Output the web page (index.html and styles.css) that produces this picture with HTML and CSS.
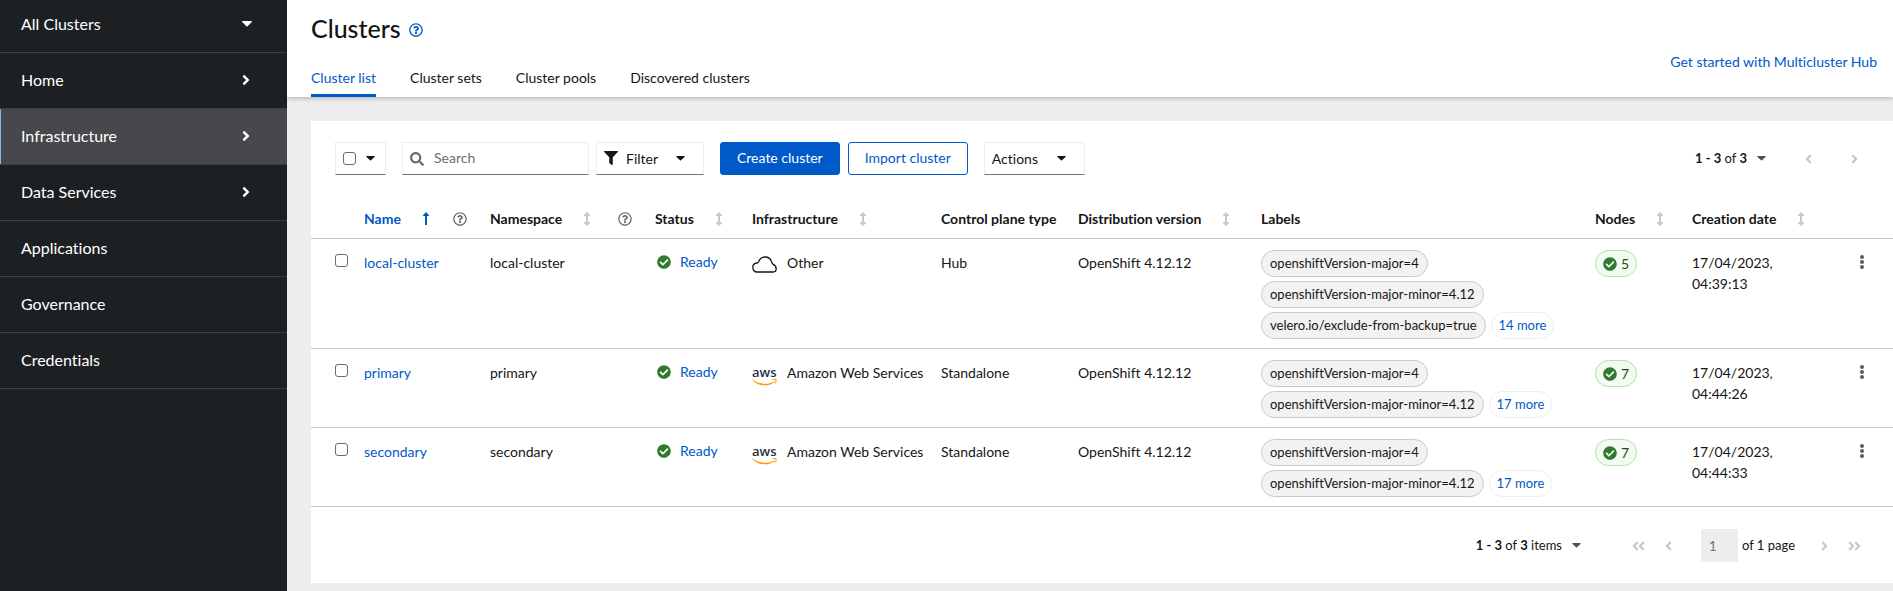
FILE: index.html
```
<!DOCTYPE html>
<html lang="en">
<head>
<meta charset="utf-8">
<title>Clusters</title>
<link rel="stylesheet" href="styles.css">
</head>
<body>
<svg class="sprite" aria-hidden="true">
  <symbol id="caret" viewBox="0 0 10 6"><path d="M.7 0h8.600c.6 0 .9.7.5 1.100L5.600 5.200a.9.9 0 0 1-1.200 0L.2 1.100C-.2.7.1 0 .7 0z"/></symbol>
  <symbol id="right" viewBox="0 0 256 512"><path d="M224.300 273l-136 136c-9.400 9.400-24.600 9.400-33.900 0l-22.600-22.600c-9.400-9.400-9.400-24.600 0-33.900l96.400-96.400-96.400-96.400c-9.400-9.400-9.400-24.600 0-33.900L54.300 103c9.400-9.400 24.600-9.400 33.900 0l136 136c9.500 9.400 9.500 24.600.1 34z"/></symbol>
  <symbol id="left" viewBox="0 0 256 512"><path d="M31.700 239l136-136c9.400-9.400 24.600-9.400 33.900 0l22.600 22.600c9.400 9.400 9.400 24.600 0 33.900L127.900 256l96.400 96.400c9.400 9.400 9.400 24.600 0 33.900L201.700 409c-9.400 9.400-24.600 9.400-33.900 0l-136-136c-9.500-9.400-9.500-24.600-.1-34z"/></symbol>
  <symbol id="help" viewBox="0 0 512 512"><path d="M256 8C119 8 8 119.100 8 256c0 137 111 248 248 248s248-111 248-248C504 119.100 393 8 256 8zm0 448c-110.500 0-200-89.400-200-200 0-110.500 89.500-200 200-200 110.500 0 200 89.500 200 200 0 110.500-89.400 200-200 200zm107.200-255.200c0 67.100-72.400 68.100-72.400 92.900V300c0 6.600-5.400 12-12 12h-45.600c-6.600 0-12-5.400-12-12v-8.700c0-35.700 27.100-50 47.600-61.500 17.600-9.800 28.300-16.500 28.300-29.600 0-17.200-22-28.700-39.800-28.700-23.200 0-33.900 11-48.900 30-4.100 5.100-11.500 6.100-16.700 2.100l-27.800-21.100c-5.100-3.900-6.300-11.100-2.600-16.400C184.800 131.500 214.900 112 261.800 112c49 0 101.500 38.300 101.500 88.800zM298 368c0 23.200-18.800 42-42 42s-42-18.800-42-42 18.800-42 42-42 42 18.800 42 42z"/></symbol>
  <symbol id="check" viewBox="0 0 512 512"><path d="M504 256c0 137-111 248-248 248S8 393 8 256 119 8 256 8s248 111 248 248zM227.300 387.300l184-184c6.200-6.200 6.200-16.400 0-22.600l-22.600-22.600c-6.200-6.200-16.400-6.200-22.600 0L216 308.100l-70.100-70.100c-6.200-6.200-16.400-6.200-22.600 0l-22.600 22.600c-6.200 6.200-6.200 16.400 0 22.600l104 104c6.200 6.300 16.400 6.300 22.600.1z"/></symbol>
  <symbol id="search" viewBox="0 0 512 512"><path d="M505 442.700L405.300 343c-4.500-4.500-10.600-7-17-7H372c27.600-35.300 44-79.700 44-128C416 93.100 322.900 0 208 0S0 93.100 0 208s93.100 208 208 208c48.300 0 92.700-16.400 128-44v16.300c0 6.400 2.500 12.500 7 17l99.700 99.700c9.400 9.400 24.600 9.400 33.900 0l28.300-28.300c9.400-9.400 9.400-24.600.1-34zM208 336c-70.700 0-128-57.200-128-128 0-70.700 57.200-128 128-128 70.700 0 128 57.200 128 128 0 70.700-57.200 128-128 128z"/></symbol>
  <symbol id="filter" viewBox="0 0 512 512"><path d="M488 0H24C2.700 0-8 25.900 7.100 41L192 225.900V432c0 7.800 3.800 15.200 10.200 19.700l80 56C298 518.700 320 507.500 320 488V225.900L504.900 41C520 25.900 509.300 0 488 0z"/></symbol>
  <symbol id="up" viewBox="0 0 6 13"><path d="M3 0l3 3.200v.8H4v9H2V4H0v-.8z"/></symbol>
  <symbol id="sort" viewBox="0 0 6 14"><path d="M3 0l3 3v1H4v6h2v1l-3 3-3-3v-1h2V4H0V3z"/></symbol>
  <symbol id="dots" viewBox="0 0 4 14"><circle cx="2" cy="2" r="2"/><circle cx="2" cy="7" r="2"/><circle cx="2" cy="12" r="2"/></symbol>
  <symbol id="cloud" viewBox="0 0 25 17"><path d="M5 16C2.500 16 .8 14 .8 11.600.8 9 2.500 7.200 5 7c.7 0 1.300-.3 1.700-1.300C7.700 2.700 10 1 13 1c3.400 0 6 2.200 6.700 5.200.2.900.5 1.500 1.300 2 1.900 1 3.200 2.500 3.200 4.600 0 2-1.300 3.200-3.200 3.200z" fill="none" stroke="currentColor" stroke-width="1.300"/></symbol>
  <symbol id="smile" viewBox="0 0 25 7"><path d="M.3.600C6 5 15 6.500 22.300 2.500c.5-.2.800.3.400.7C16.500 7.800 6 7.500.1 1c-.3-.3-.1-.6.2-.4zM24.500.5c-.6-.8-3.300-.5-4.400.2-.4.300-.1.500.3.4 1-.2 2.800-.4 3.100.1.400.5-.3 2.300-.7 3.200-.1.300.2.400.5.100 1.100-1 1.700-3.300 1.200-4z"/></symbol>
</svg>

<div class="app">
  <nav class="sidebar" aria-label="Main">
    <button class="nav-item perspective" type="button">All Clusters<svg class="nav-caret"><use href="#caret"/></svg></button>
    <button class="nav-item" type="button">Home<svg class="nav-chevron"><use href="#right"/></svg></button>
    <button class="nav-item active" type="button">Infrastructure<svg class="nav-chevron"><use href="#right"/></svg></button>
    <button class="nav-item" type="button">Data Services<svg class="nav-chevron"><use href="#right"/></svg></button>
    <a class="nav-item" href="#applications">Applications</a>
    <a class="nav-item" href="#governance">Governance</a>
    <a class="nav-item" href="#credentials">Credentials</a>
  </nav>

  <main class="main">
    <header class="page-header">
      <div class="heading">
        <div class="title-row">
          <h1>Clusters</h1>
          <button class="icon-button title-help" type="button" aria-label="About clusters"><svg class="icon"><use href="#help"/></svg></button>
        </div>
        <nav class="tabs" aria-label="Clusters">
          <a class="tab current" href="#list" aria-current="page">Cluster list</a>
          <a class="tab" href="#sets">Cluster sets</a>
          <a class="tab" href="#pools">Cluster pools</a>
          <a class="tab" href="#discovered">Discovered clusters</a>
        </nav>
      </div>
      <a class="start-link" href="#start">Get started with Multicluster Hub</a>
    </header>

    <section class="card">
      <div class="toolbar">
        <div class="control bulk">
          <input type="checkbox" aria-label="Select all">
          <button class="icon-button" type="button" aria-label="Selection options"><svg class="caret"><use href="#caret"/></svg></button>
        </div>
        <div class="filters">
          <label class="control search"><svg class="icon"><use href="#search"/></svg><input type="text" placeholder="Search" aria-label="Search"></label>
          <button class="control filter" type="button"><svg class="icon"><use href="#filter"/></svg>Filter<svg class="caret"><use href="#caret"/></svg></button>
        </div>
        <div class="actions">
          <button class="button primary" type="button">Create cluster</button>
          <button class="button secondary" type="button">Import cluster</button>
        </div>
        <button class="control actions-menu" type="button">Actions<svg class="caret"><use href="#caret"/></svg></button>
        <div class="pager top">
          <button class="range" type="button"><span><b>1 - 3</b> of <b>3</b></span><svg class="caret"><use href="#caret"/></svg></button>
          <button class="page-button" type="button" disabled aria-label="Previous page"><svg class="chevron"><use href="#left"/></svg></button>
          <button class="page-button" type="button" disabled aria-label="Next page"><svg class="chevron"><use href="#right"/></svg></button>
        </div>
      </div>

      <table class="clusters">
        <colgroup>
          <col class="c-check"><col class="c-name"><col class="c-namespace"><col class="c-status"><col class="c-infra"><col class="c-plane"><col class="c-version"><col><col class="c-nodes"><col class="c-date"><col class="c-menu">
        </colgroup>
        <thead>
          <tr>
            <td></td>
            <th scope="col"><div class="head sorted"><button class="sort" type="button">Name<svg class="up"><use href="#up"/></svg></button><button class="icon-button" type="button" aria-label="About name"><svg class="icon"><use href="#help"/></svg></button></div></th>
            <th scope="col"><div class="head"><button class="sort" type="button">Namespace<svg class="updown"><use href="#sort"/></svg></button><button class="icon-button" type="button" aria-label="About namespace"><svg class="icon"><use href="#help"/></svg></button></div></th>
            <th scope="col"><button class="sort" type="button">Status<svg class="updown"><use href="#sort"/></svg></button></th>
            <th scope="col"><button class="sort" type="button">Infrastructure<svg class="updown"><use href="#sort"/></svg></button></th>
            <th scope="col">Control plane type</th>
            <th scope="col"><button class="sort" type="button">Distribution version<svg class="updown"><use href="#sort"/></svg></button></th>
            <th scope="col">Labels</th>
            <th scope="col"><button class="sort" type="button">Nodes<svg class="updown"><use href="#sort"/></svg></button></th>
            <th scope="col"><button class="sort" type="button">Creation date<svg class="updown"><use href="#sort"/></svg></button></th>
            <td></td>
          </tr>
        </thead>
        <tbody>
          <tr>
            <td class="check-cell"><input type="checkbox" aria-label="Select local-cluster"></td>
            <td><a href="#local-cluster">local-cluster</a></td>
            <td>local-cluster</td>
            <td class="status-cell"><button class="status" type="button"><svg class="icon"><use href="#check"/></svg>Ready</button></td>
            <td><div class="provider"><svg class="cloud"><use href="#cloud"/></svg>Other</div></td>
            <td>Hub</td>
            <td>OpenShift 4.12.12</td>
            <td class="label-cell"><div class="labels"><span class="pill">openshiftVersion-major=4</span><span class="pill">openshiftVersion-major-minor=4.12</span><span class="pill">velero.io/exclude-from-backup=true</span><button class="pill more" type="button">14 more</button></div></td>
            <td class="label-cell"><span class="pill nodes"><svg class="icon"><use href="#check"/></svg>5</span></td>
            <td>17/04/2023, 04:39:13</td>
            <td class="menu-cell"><button class="icon-button" type="button" aria-label="Actions for local-cluster"><svg class="dots"><use href="#dots"/></svg></button></td>
          </tr>
          <tr>
            <td class="check-cell"><input type="checkbox" aria-label="Select primary"></td>
            <td><a href="#primary">primary</a></td>
            <td>primary</td>
            <td class="status-cell"><button class="status" type="button"><svg class="icon"><use href="#check"/></svg>Ready</button></td>
            <td><div class="provider"><span class="aws">aws<svg class="smile"><use href="#smile"/></svg></span>Amazon Web Services</div></td>
            <td>Standalone</td>
            <td>OpenShift 4.12.12</td>
            <td class="label-cell"><div class="labels"><span class="pill">openshiftVersion-major=4</span><span class="pill">openshiftVersion-major-minor=4.12</span><button class="pill more" type="button">17 more</button></div></td>
            <td class="label-cell"><span class="pill nodes"><svg class="icon"><use href="#check"/></svg>7</span></td>
            <td>17/04/2023, 04:44:26</td>
            <td class="menu-cell"><button class="icon-button" type="button" aria-label="Actions for primary"><svg class="dots"><use href="#dots"/></svg></button></td>
          </tr>
          <tr>
            <td class="check-cell"><input type="checkbox" aria-label="Select secondary"></td>
            <td><a href="#secondary">secondary</a></td>
            <td>secondary</td>
            <td class="status-cell"><button class="status" type="button"><svg class="icon"><use href="#check"/></svg>Ready</button></td>
            <td><div class="provider"><span class="aws">aws<svg class="smile"><use href="#smile"/></svg></span>Amazon Web Services</div></td>
            <td>Standalone</td>
            <td>OpenShift 4.12.12</td>
            <td class="label-cell"><div class="labels"><span class="pill">openshiftVersion-major=4</span><span class="pill">openshiftVersion-major-minor=4.12</span><button class="pill more" type="button">17 more</button></div></td>
            <td class="label-cell"><span class="pill nodes"><svg class="icon"><use href="#check"/></svg>7</span></td>
            <td>17/04/2023, 04:44:33</td>
            <td class="menu-cell"><button class="icon-button" type="button" aria-label="Actions for secondary"><svg class="dots"><use href="#dots"/></svg></button></td>
          </tr>
        </tbody>
      </table>

      <div class="pager bottom">
        <button class="range" type="button"><span><b>1 - 3</b> of <b>3</b> items</span><svg class="caret"><use href="#caret"/></svg></button>
        <button class="page-button" type="button" disabled aria-label="First page"><svg class="chevron"><use href="#left"/></svg><svg class="chevron"><use href="#left"/></svg></button>
        <button class="page-button" type="button" disabled aria-label="Previous page"><svg class="chevron"><use href="#left"/></svg></button>
        <label class="page-number"><input type="text" value="1" disabled aria-label="Current page">of 1 page</label>
        <button class="page-button" type="button" disabled aria-label="Next page"><svg class="chevron"><use href="#right"/></svg></button>
        <button class="page-button" type="button" disabled aria-label="Last page"><svg class="chevron"><use href="#right"/></svg><svg class="chevron"><use href="#right"/></svg></button>
      </div>
    </section>
  </main>
</div>
</body>
</html>
```
FILE: styles.css
```
* { box-sizing: border-box; }

body {
  margin: 0;
  background: #ededed;
  color: #151515;
  font: 14px/21px Lato, "Open Sans", sans-serif;
  font-variant-ligatures: none;
}

button, input { margin: 0; font: inherit; color: inherit; }
button { padding: 0; border: 0; background: none; text-align: left; }
a { color: #0059c8; text-decoration: none; }
b { font-weight: 700; }
svg { display: block; flex: none; fill: currentColor; }

.sprite { position: absolute; width: 0; height: 0; }
.icon { width: 14px; height: 14px; }
.caret { width: 9px; height: 5px; }

input[type="checkbox"] {
  appearance: none;
  display: block;
  width: 13px;
  height: 13px;
  border: 1px solid #6b6b6b;
  border-radius: 3px;
  background: #fff;
}

.app { display: flex; min-height: 100vh; }

/* Sidebar */
.sidebar { flex: none; width: 287px; background: #1d2023; }

.nav-item {
  display: flex;
  align-items: center;
  justify-content: space-between;
  width: 100%;
  height: 56px;
  padding: 0 37px 2px 21px;
  border-bottom: 1px solid #3b3e42;
  color: #fff;
  font-size: 16px;
  line-height: 24px;
}

.perspective { height: 53px; padding: 0 35px 4px 21px; }
.nav-item.active { background: #47484c; box-shadow: inset 1px 0 #73bcf7; }
.nav-caret { width: 10px; height: 6px; }
.nav-chevron { width: 8px; height: 16px; }

/* Page header */
.main { flex: 1; min-width: 0; }

.page-header {
  display: flex;
  align-items: flex-start;
  justify-content: space-between;
  padding: 0 16px 0 24px;
  background: #fff;
  box-shadow: 0 2px 4px rgba(0, 0, 0, 0.2);
}

.heading { padding-top: 11px; }
.title-row { display: flex; align-items: center; gap: 8px; }
h1 { margin: 0; font-size: 25px; font-weight: 500; line-height: 34px; }
.title-help { padding-top: 4px; color: #0059c8; }
.start-link { margin-top: 51px; }

.tabs { display: flex; gap: 34px; margin-top: 17px; }
.tab { height: 35px; padding-top: 5px; border-bottom: 3px solid transparent; color: #151515; }
.tab.current { border-bottom-color: #0059c8; color: #0059c8; }

/* Card and toolbar */
.card { margin: 24px 0 8px 24px; background: #fff; }
.toolbar { display: flex; align-items: center; padding: 21px 35px 0 24px; }

.control {
  display: flex;
  align-items: center;
  height: 33px;
  border: 1px solid #ededed;
  border-bottom-color: #72767b;
}

.bulk { width: 51px; padding: 0 10px 0 7px; justify-content: space-between; margin-right: 16px; }
.filters { display: flex; gap: 7px; margin-right: 16px; }
.search { width: 187px; gap: 10px; padding: 0 7px; color: #6a6e73; }
.search input { flex: 1; min-width: 0; padding: 0 0 2px; border: 0; outline: 0; background: none; }
.search input::placeholder { color: #6a6e73; opacity: 1; }
.filter { width: 108px; gap: 8px; padding: 0 18px 1px 7px; }
.filter .caret, .actions-menu .caret { margin-left: auto; }
.actions { display: flex; gap: 8px; margin-right: 16px; }
.actions-menu { width: 101px; padding: 0 18px 1px 7px; }

.button { height: 33px; padding: 0 16px 2px; border: 1px solid #0059c8; border-radius: 3px; text-align: center; }
.primary { background: #0059c8; color: #fff; }
.secondary { color: #0059c8; }

/* Pagination */
.pager { display: flex; align-items: center; justify-content: flex-end; font-size: 13px; }
.pager.top { margin-left: auto; gap: 38px; }
.range { display: flex; align-items: center; gap: 10px; }
.range .caret { color: #4f5255; }
.page-button { display: flex; align-items: center; justify-content: center; width: 8px; color: #c7c7c7; }
.chevron { width: 7px; height: 14px; }
.chevron + .chevron { margin-left: -1px; }

.pager.bottom { gap: 22px; padding: 22px 35px 21px 24px; }
.pager.bottom .range { margin-right: 32px; }
.page-number { display: flex; align-items: center; gap: 4px; margin: 0 3px 0 6px; }
.page-number input { width: 37px; height: 33px; padding: 0 8px; border: 0; background: #ededed; color: #6a6e73; }

/* Table */
.clusters { width: 100%; margin-top: 22px; border-collapse: collapse; table-layout: fixed; }
.c-check { width: 45px; }
.c-name { width: 126px; }
.c-namespace { width: 165px; }
.c-status { width: 97px; }
.c-infra { width: 189px; }
.c-plane { width: 137px; }
.c-version { width: 183px; }
.c-nodes { width: 97px; }
.c-date { width: 138px; }
.c-menu { width: 71px; }

.clusters th, .clusters td { padding: 0 8px; text-align: left; vertical-align: top; border-bottom: 1px solid #c9c9c9; }
.clusters th { padding: 11px 0 9px 8px; font-weight: 700; white-space: nowrap; }
.clusters tbody td { padding-top: 13px; padding-bottom: 9px; }

.head { display: flex; align-items: center; justify-content: space-between; padding-right: 15px; }
.head .icon-button { color: #6a6e73; }
.sort { display: flex; align-items: center; gap: 22px; }
.sorted .sort { color: #0059c8; }
.up { width: 6px; height: 13px; }
.updown { width: 6px; height: 14px; color: #c9c9c9; }

.clusters tbody .check-cell { padding: 15px 0 0 24px; }
.clusters tbody .status-cell { padding-top: 12px; }
.status { display: flex; align-items: center; gap: 9px; padding-left: 2px; color: #0059c8; }
.status .icon, .nodes .icon { color: #2f7a2f; }

.provider { display: flex; gap: 10px; white-space: nowrap; }
.cloud { width: 25px; height: 17px; margin-top: 4px; }
.aws { width: 25px; height: 21px; padding-top: 3px; color: #252f3e; font: 600 13px/14px "Open Sans", sans-serif; }
.smile { width: 25px; height: 7px; color: #f90; }

.clusters tbody .label-cell { padding-top: 11px; }
.labels { display: flex; flex-wrap: wrap; gap: 4px 5px; width: 300px; }

.pill {
  height: 27px;
  padding: 0 8px;
  border: 1px solid #c9c9c9;
  border-radius: 14px;
  background: #f2f2f2;
  font-size: 13px;
  line-height: 25px;
  white-space: nowrap;
}

.more { padding: 0 7px; border-color: #ededed; background: #fff; color: #0059c8; }
.nodes { display: inline-flex; align-items: center; gap: 4px; padding: 0 7px; border-color: #b5deae; background: #f3faf2; color: #1e4f18; font-size: 14px; }

.clusters tbody .menu-cell { padding: 16px 0 0 38px; }
.menu-cell .icon-button { display: block; color: #5a5d60; }
.dots { width: 4px; height: 14px; }
```
